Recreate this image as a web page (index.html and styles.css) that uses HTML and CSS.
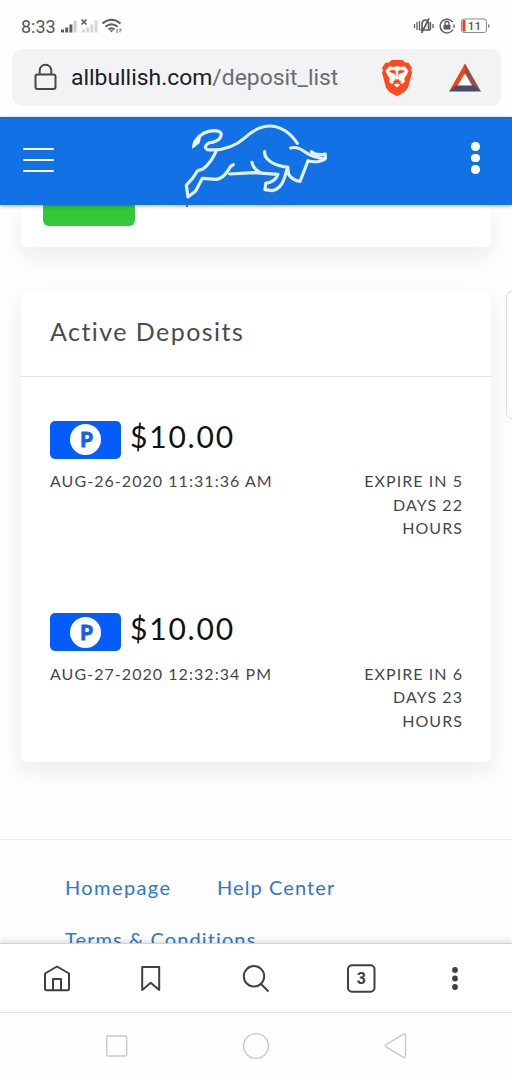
FILE: index.html
```html
<!DOCTYPE html>
<html lang="en">
<head>
<meta charset="utf-8">
<title>Deposit list</title>
<link rel="stylesheet" href="styles.css">
</head>
<body>
<div class="phone">
  <div class="status">
    <span class="clock">8:33</span>
    <svg class="signals" width="66" height="22" viewBox="0 0 66 22">
      <g fill="#5b5d60"><rect x="2" y="14.500" width="3" height="3"/><rect x="6.200" y="12.500" width="3" height="5"/><rect x="10.400" y="9.500" width="3" height="8"/></g>
      <rect x="14.600" y="5.500" width="3" height="12" fill="#c9ced6"/>
      <path d="M22.500 4.500l5 5M27.500 4.500l-5 5" stroke="#5b5d60" stroke-width="1.700"/>
      <g fill="#d3d6da"><rect x="23" y="14.500" width="3" height="3"/><rect x="27.200" y="12.500" width="3" height="5"/><rect x="31.400" y="9.500" width="3" height="8"/><rect x="35.600" y="5.500" width="3" height="12"/></g>
      <g fill="none" stroke="#5b5d60" stroke-width="2"><path d="M43.500 8.500q9-7.500 18 0M46.500 11.800q6-5 12 0M49.500 14.600q3-2.600 6 0"/></g>
      <path d="M50.700 15.200l1.800 2.400 1.800-2.400z" fill="#5b5d60"/>
      <path d="M58 14v4M61 13.500v4M61 14l2 1.500" stroke="#77797c" fill="none"/>
    </svg>
    <svg class="phone-state" width="78" height="22" viewBox="0 0 78 22">
      <g fill="none" stroke="#5b5d60" stroke-width="1.300">
        <path d="M2.500 9v4M5 7v8M7.500 6v9.500M18.500 7v8M21 9v4" />
        <path d="M8.500 15h9.500M10 15V8.500q.5-3.500 3.300-3.500t3.300 3.500V15M9.500 18L17 3.500" stroke-width="1.700"/>
        <path d="M40.700 7.200A6.900 6.900 0 1 0 41 14.500" stroke-width="1.500"/><path d="M42 9.500v3.500"/>
        <path d="M33 10.500V8.300q0-1.800 2-1.800t2 1.800v2.200"/>
        <rect x="49.500" y="4" width="25" height="13.500" rx="2.500" stroke="#8b8d8f" stroke-width="1"/>
      </g>
      <rect x="31.500" y="9.800" width="7" height="4.700" rx=".8" fill="#5b5d60"/>
      <path d="M53.500 5h-2a1 1 0 0 0-1 1v9.500a1 1 0 0 0 1 1h2z" fill="#e2431f"/>
      <rect x="76" y="9.500" width="1.500" height="3" fill="#77797c"/>
      <text class="battery-text" x="56" y="14.700">11</text>
    </svg>
  </div>

  <div class="address">
    <svg class="lock" width="24" height="30" viewBox="0 0 24 30"><g fill="none" stroke="#45474a" stroke-width="2"><rect x="1.500" y="11.500" width="20" height="14.500" rx="2"/><path d="M5.700 11V7.500a5.800 5.800 0 0 1 11.600 0V11"/></g></svg>
    <span class="url">allbullish.com<span class="path">/deposit_list</span></span>
    <svg class="lion" width="32" height="38" viewBox="0 0 32 38">
      <path fill="#fb4a1c" d="M10.500 1h11l2.500 2.500 3.500.3 3.500 5-1 2.500 1 2.500-4 15-3.500 4.200L16 37.200l-7.500-4.200L5 28.800 1 13.800l1-2.500-1-2.500 3.500-5L8 3.500z"/>
      <path fill="#fff" d="M8.500 7.300l4 .6 3.500-.8 3.500.8 4-.6 4 4.500-1.500 3.500-2.800 4.500.8 3-3 2.200-1.700-1.300.7-1.700-4-1.500-4 1.500.7 1.700L11 25l-3-2.200.8-3L6 15.300l-1.500-3.500zM16 24.200l3.300 1.500L16 28.400l-3.300-2.700z"/>
      <path fill="#fb4a1c" d="M8.500 11.500l4-.5 2.500 1-.6 6-.9-3.300-5-1.700zM23.500 11.500l-4-.5-2.500 1 .6 6 .9-3.300 5-1.700zM13 19.500l3 1.300 3-1.300-3 3z"/>
    </svg>
    <svg class="bat" width="34" height="30" viewBox="0 0 34 30"><path fill="#fff" d="M17 9l8 15H9z"/><path fill="#f4421d" d="M17 .5V10.500L8.500 24 1 28.500z"/><path fill="#965047" d="M17 .5l16 28L25 24 17 10.500z"/><path fill="#4b4b63" d="M1 28.500L8 22.500h18l7 6z"/></svg>
  </div>

  <header class="site-head">
    <div class="burger"><i></i><i></i><i></i></div>
    <svg class="bull" width="170" height="87" viewBox="0 9 510 261">
      <g fill="none" stroke="#e4effd" stroke-width="9.500" stroke-linecap="round" stroke-linejoin="round">
        <path d="M72 92L77 76Q98 48 131 47Q163 48 150 69Q142 80 116 84Q98 96 112 104Q178 110 226 67Q264 32 303 33Q350 37 382 85"/>
        <path d="M138 109Q124 142 99 162L83 167L69 188L49 211L54 246L77 228L97 190L140 193Q160 190 176 164Q180 153 190 149"/>
        <path d="M179 177L250 173L324 178Q316 201 287 205L285 224L307 227Q333 222 343 190L353 157Q309 151 292 132Q282 121 284 110"/>
        <path d="M246 142Q250 162 272 173M353 157L356 178Q366 195 390 199L414 138"/>
        <path d="M362 99Q381 93 405 111Q430 129 466 131Q447 145 413 138M424 110Q440 123 466 117V130"/>
      </g>
      <path fill="#f2f7fe" d="M66 102L69 80L94 62L89 84Z"/>
    </svg>
    <div class="head-dots"><i></i><i></i><i></i></div>
  </header>

  <main class="page">
    <section class="card card-above"><div class="green-button"></div><span class="clipped-tail"></span></section>
    <section class="card deposits">
      <h1 class="card-title"><span>Active Deposits</span></h1>
      <div class="deposit">
        <div class="money"><div class="badge"><span class="coin">P</span></div><span class="amount">$10.00</span></div>
        <div class="info"><span class="date">AUG-26-2020 11:31:36 AM</span><span class="expire">EXPIRE IN 5<br>DAYS 22<br>HOURS</span></div>
      </div>
      <div class="deposit">
        <div class="money"><div class="badge"><span class="coin">P</span></div><span class="amount">$10.00</span></div>
        <div class="info"><span class="date">AUG-27-2020 12:32:34 PM</span><span class="expire">EXPIRE IN 6<br>DAYS 23<br>HOURS</span></div>
      </div>
    </section>
    <aside class="side-tab"></aside>
    <footer class="links"><a class="home-link">Homepage</a><a class="help-link">Help Center</a><a class="terms-link">Terms &amp; Conditions</a></footer>
  </main>

  <nav class="toolbar">
    <svg width="512" height="69" viewBox="0 0 512 69">
      <g fill="none" stroke="#3f4044" stroke-width="2" stroke-linejoin="round">
        <path d="M57 22.500L69 29.500V45q0 1.300-1.500 1.300H46.500Q45 46.300 45 45V29.500zM53 46V35h8V46"/>
        <path d="M142.200 23h17V46l-8.500-7.200-8.500 7.200z"/>
        <circle cx="254" cy="32.300" r="10.200"/><path d="M261 40l7.500 7.500"/>
        <rect x="348" y="21.300" width="26.500" height="26.500" rx="4"/>
      </g>
      <text class="tab-count" x="361.300" y="40.300">3</text>
      <g fill="#3f4044"><circle cx="455" cy="26" r="2.900"/><circle cx="455" cy="34.500" r="2.900"/><circle cx="455" cy="43" r="2.900"/></g>
    </svg>
  </nav>
  <nav class="system-nav">
    <svg width="512" height="67" viewBox="0 0 512 67"><g fill="none" stroke="#c5c8d5" stroke-width="1.400" stroke-linejoin="round"><rect x="106.700" y="23" width="20" height="20" rx="1.500"/><circle cx="256" cy="33" r="12.400"/><path d="M386 31.700L403.500 21.100q2-.8 2 1v21.300q0 1.800-2 1L386 33.800q-1.500-1 0-2.100z"/></g></svg>
  </nav>
</div>
</body>
</html>
```
FILE: styles.css
```css
* { box-sizing: border-box; }
body { margin: 0; background: #fefefe; font-family: Lato, "Open Sans", sans-serif; }
.phone { width: 512px; height: 1080px; display: flex; flex-direction: column; overflow: hidden; }

.status { height: 49px; display: flex; align-items: flex-start; padding: 15px 21px 0; }
.clock { width: 38px; font: 400 18px/24px Roboto, sans-serif; color: #55575a; }
.signals { flex: none; }
.phone-state { margin-left: auto; margin-right: 1px; }
.battery-text { font: 500 11px Roboto, sans-serif; fill: #4d4f52; letter-spacing: .6px; }

.address { height: 57px; margin: 0 11px 11px 12px; border-radius: 10px; background: #f1f3f4; display: flex; align-items: center; padding: 0 19px 0 22px; }
.lock { flex: none; }
.url { margin-left: 13px; font: 400 22.900px/32px Roboto, sans-serif; color: #1b1c1e; white-space: nowrap; }
.path { color: #6a6c70; }
.lion { margin-left: auto; margin-right: 35px; }

.site-head { height: 88px; flex: none; display: grid; grid-template-columns: 170px 170px 172px; background: #1371e6; box-shadow: 0 1px 4px rgba(0, 0, 0, .3); border-top: 1px solid #1b65c4; position: relative; z-index: 2; }
.burger { padding: 30px 0 0 23px; display: flex; flex-direction: column; gap: 8.500px; }
.burger i { width: 31px; height: 2.400px; background: #fff; border-radius: 1px; }
.head-dots { padding: 24px 0 0 131px; display: flex; flex-direction: column; gap: 3px; }
.head-dots i { width: 8.500px; height: 8.500px; border-radius: 50%; background: #fff; }

.page { height: 738px; flex: none; overflow: hidden; position: relative; background: #fdfdfd; }
.card { margin: 0 21px; border-radius: 6px; background: #fff; box-shadow: 0 9px 22px rgba(20, 30, 40, .075); }
.card-above { height: 42px; display: flex; padding-left: 22px; }
.green-button { width: 92px; height: 21px; background: #31c938; border-radius: 0 0 6px 6px; }
.clipped-tail { width: 2px; height: 2px; margin-left: 51px; background: #7a7d82; }
.deposits { margin-top: 44px; height: 471px; }
.card-title { margin: 0; height: 86px; padding: 23px 29px 0; border-bottom: 1px solid #e4e4e6; font: 400 25px/34px Lato, sans-serif; color: #494b50; letter-spacing: 1.450px; }
.deposit { height: 192.500px; padding: 43.500px 28px 0 29px; }
.money { display: flex; height: 38px; }
.badge { width: 71px; height: 38px; border-radius: 5px; background: #045cfb; display: flex; align-items: center; justify-content: center; }
.coin { width: 31px; height: 31px; border-radius: 50%; background: #fff; color: #145ff0; font: 900 20px/30px Lato, sans-serif; text-align: center; padding-left: 2px; -webkit-text-stroke: .8px #145ff0; }
.amount { margin-left: 9px; font-size: 30px; line-height: 31px; letter-spacing: 1.800px; color: #111214; }
.info { display: flex; justify-content: space-between; padding-top: 10.500px; font-size: 16px; line-height: 23.500px; letter-spacing: 1.050px; color: #45474c; white-space: nowrap; }
.expire { text-align: right; }
.side-tab { position: absolute; left: 506px; top: 86px; width: 30px; height: 128px; border: 1px solid #dddddf; border-radius: 6px; background: #fff; }
.links { margin-top: 77px; height: 104px; border-top: 1px solid #ececee; padding: 33px 60px 0 65px; display: grid; grid-template-columns: 152px 1fr; grid-auto-rows: 52px; font-size: 20px; line-height: 28px; letter-spacing: 1.100px; color: #2d77d2; }
.home-link { letter-spacing: 1.400px; }
.terms-link { grid-column: span 2; }

.toolbar { height: 69px; flex: none; border-top: 1px solid #d2d4d4; background: #fff; box-shadow: 0 -2px 5px rgba(0, 0, 0, .12); position: relative; z-index: 2; }
.toolbar svg, .system-nav svg { display: block; }
.tab-count { font: 700 16px Roboto, sans-serif; fill: #3f4044; text-anchor: middle; }
.system-nav { height: 68px; flex: none; border-top: 1px solid #dddfe0; background: #fefefe; position: relative; z-index: 3; }
```
